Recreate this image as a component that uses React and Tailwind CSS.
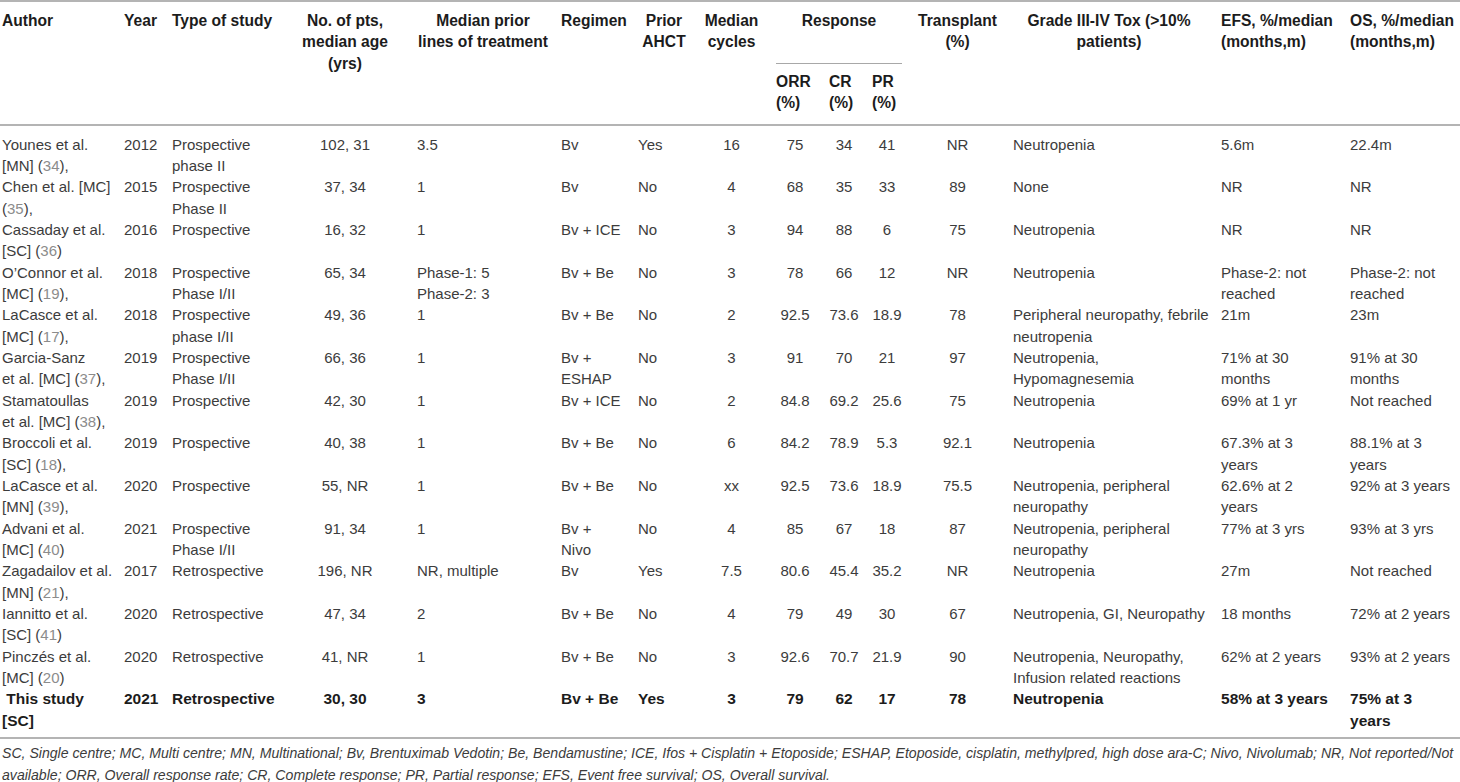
const ref = (n) => <span className="text-[#8c8c8c]">{n}</span>;

const cols = [
    { key: 'author', w: 'w-[124px]', td: 'pl-[2px] pr-[10px] text-left' },
    { key: 'year', w: 'w-[48px]', td: 'pr-[10px] text-left' },
    { key: 'type', w: 'w-[118px]', td: 'pr-[12px] text-left' },
    { key: 'pts', w: 'w-[127px]', td: 'pr-[17px] text-center' },
    { key: 'prior', w: 'w-[144px]', td: 'pr-[12px] text-left' },
    { key: 'regimen', w: 'w-[77px]', td: 'pr-[15px] text-left' },
    { key: 'ahct', w: 'w-[66px]', td: 'pr-[12px] text-left' },
    { key: 'cycles', w: 'w-[72px]', td: 'pr-[17px] text-center' },
    { key: 'orr', w: 'w-[53px]', td: 'pr-[15px] text-center' },
    { key: 'cr', w: 'w-[43px]', td: 'pr-[13px] text-center' },
    { key: 'pr', w: 'w-[46px]', td: 'pr-[16px] text-center' },
    { key: 'tx', w: 'w-[95px]', td: 'pr-[16px] text-center' },
    { key: 'tox', w: 'w-[208px]', td: 'pr-[8px] text-left' },
    { key: 'efs', w: 'w-[129px]', td: 'pr-[10px] text-left' },
    { key: 'os', w: 'w-[110px]', td: 'text-left' },
];

// line breaks written out so the cells wrap as in the printed table
const rows = [
    { author: <>Younes et al.<br />[MN] ({ref(34)}),</>, year: '2012', type: <>Prospective<br />phase II</>, pts: '102, 31', prior: '3.5', regimen: 'Bv', ahct: 'Yes', cycles: '16', orr: '75', cr: '34', pr: '41', tx: 'NR', tox: 'Neutropenia', efs: '5.6m', os: '22.4m' },
    { author: <>Chen et al. [MC]<br />({ref(35)}),</>, year: '2015', type: <>Prospective<br />Phase II</>, pts: '37, 34', prior: '1', regimen: 'Bv', ahct: 'No', cycles: '4', orr: '68', cr: '35', pr: '33', tx: '89', tox: 'None', efs: 'NR', os: 'NR' },
    { author: <>Cassaday et al.<br />[SC] ({ref(36)})</>, year: '2016', type: 'Prospective', pts: '16, 32', prior: '1', regimen: 'Bv + ICE', ahct: 'No', cycles: '3', orr: '94', cr: '88', pr: '6', tx: '75', tox: 'Neutropenia', efs: 'NR', os: 'NR' },
    { author: <>O’Connor et al.<br />[MC] ({ref(19)}),</>, year: '2018', type: <>Prospective<br />Phase I/II</>, pts: '65, 34', prior: <>Phase-1: 5<br />Phase-2: 3</>, regimen: 'Bv + Be', ahct: 'No', cycles: '3', orr: '78', cr: '66', pr: '12', tx: 'NR', tox: 'Neutropenia', efs: <>Phase-2: not<br />reached</>, os: <>Phase-2: not<br />reached</> },
    { author: <>LaCasce et al.<br />[MC] ({ref(17)}),</>, year: '2018', type: <>Prospective<br />phase I/II</>, pts: '49, 36', prior: '1', regimen: 'Bv + Be', ahct: 'No', cycles: '2', orr: '92.5', cr: '73.6', pr: '18.9', tx: '78', tox: <>Peripheral neuropathy, febrile<br />neutropenia</>, efs: '21m', os: '23m' },
    { author: <>Garcia-Sanz<br />et al. [MC] ({ref(37)}),</>, year: '2019', type: <>Prospective<br />Phase I/II</>, pts: '66, 36', prior: '1', regimen: <>Bv +<br />ESHAP</>, ahct: 'No', cycles: '3', orr: '91', cr: '70', pr: '21', tx: '97', tox: <>Neutropenia,<br />Hypomagnesemia</>, efs: <>71% at 30<br />months</>, os: <>91% at 30<br />months</> },
    { author: <>Stamatoullas<br />et al. [MC] ({ref(38)}),</>, year: '2019', type: 'Prospective', pts: '42, 30', prior: '1', regimen: 'Bv + ICE', ahct: 'No', cycles: '2', orr: '84.8', cr: '69.2', pr: '25.6', tx: '75', tox: 'Neutropenia', efs: '69% at 1 yr', os: 'Not reached' },
    { author: <>Broccoli et al.<br />[SC] ({ref(18)}),</>, year: '2019', type: 'Prospective', pts: '40, 38', prior: '1', regimen: 'Bv + Be', ahct: 'No', cycles: '6', orr: '84.2', cr: '78.9', pr: '5.3', tx: '92.1', tox: 'Neutropenia', efs: <>67.3% at 3<br />years</>, os: <>88.1% at 3<br />years</> },
    { author: <>LaCasce et al.<br />[MN] ({ref(39)}),</>, year: '2020', type: 'Prospective', pts: '55, NR', prior: '1', regimen: 'Bv + Be', ahct: 'No', cycles: 'xx', orr: '92.5', cr: '73.6', pr: '18.9', tx: '75.5', tox: <>Neutropenia, peripheral<br />neuropathy</>, efs: <>62.6% at 2<br />years</>, os: '92% at 3 years' },
    { author: <>Advani et al.<br />[MC] ({ref(40)})</>, year: '2021', type: <>Prospective<br />Phase I/II</>, pts: '91, 34', prior: '1', regimen: <>Bv +<br />Nivo</>, ahct: 'No', cycles: '4', orr: '85', cr: '67', pr: '18', tx: '87', tox: <>Neutropenia, peripheral<br />neuropathy</>, efs: '77% at 3 yrs', os: '93% at 3 yrs' },
    { author: <>Zagadailov et al.<br />[MN] ({ref(21)}),</>, year: '2017', type: 'Retrospective', pts: '196, NR', prior: 'NR, multiple', regimen: 'Bv', ahct: 'Yes', cycles: '7.5', orr: '80.6', cr: '45.4', pr: '35.2', tx: 'NR', tox: 'Neutropenia', efs: '27m', os: 'Not reached' },
    { author: <>Iannitto et al.<br />[SC] ({ref(41)})</>, year: '2020', type: 'Retrospective', pts: '47, 34', prior: '2', regimen: 'Bv + Be', ahct: 'No', cycles: '4', orr: '79', cr: '49', pr: '30', tx: '67', tox: 'Neutropenia, GI, Neuropathy', efs: '18 months', os: '72% at 2 years' },
    { author: <>Pinczés et al.<br />[MC] ({ref(20)})</>, year: '2020', type: 'Retrospective', pts: '41, NR', prior: '1', regimen: 'Bv + Be', ahct: 'No', cycles: '3', orr: '92.6', cr: '70.7', pr: '21.9', tx: '90', tox: <>Neutropenia, Neuropathy,<br />Infusion related reactions</>, efs: '62% at 2 years', os: '93% at 2 years' },
    { author: <>{'\u00a0'}This study<br />[SC]</>, year: '2021', type: 'Retrospective', pts: '30, 30', prior: '3', regimen: 'Bv + Be', ahct: 'Yes', cycles: '3', orr: '79', cr: '62', pr: '17', tx: '78', tox: 'Neutropenia', efs: '58% at 3 years', os: <>75% at 3<br />years</>, bold: true },
];

const th = 'align-top font-bold text-[#1c1c1c] border-b-2 border-[#b4b4b4] pt-[8px] whitespace-nowrap';

export default function App() {
    return (
        <div className="w-[1460px] bg-white font-['Liberation_Sans',Arial,sans-serif] text-[15px] leading-[21.33px] text-[#3c3c3c]">
            <div className="border-t-2 border-[#b4b4b4]">
                <table className="w-full table-fixed border-separate border-spacing-0">
                    <colgroup>
                        {cols.map((c) => <col key={c.key} className={c.w} />)}
                    </colgroup>
                    <thead className="text-[15.6px]">
                        <tr>
                            <th rowSpan={2} className={`${th} pl-[2px] text-left`}>Author</th>
                            <th rowSpan={2} className={`${th} text-left`}>Year</th>
                            <th rowSpan={2} className={`${th} text-left`}>Type of study</th>
                            <th rowSpan={2} className={`${th} pr-[17px] text-center`}>No. of pts,<br />median age<br />(yrs)</th>
                            <th rowSpan={2} className={`${th} pr-[12px] text-center`}>Median prior<br />lines of treatment</th>
                            <th rowSpan={2} className={`${th} text-left`}>Regimen</th>
                            <th rowSpan={2} className={`${th} pr-[14px] text-center`}>Prior<br />AHCT</th>
                            <th rowSpan={2} className={`${th} pr-[17px] text-center`}>Median<br />cycles</th>
                            <th colSpan={3} className="align-top font-bold text-[#1c1c1c] pt-[8px] pr-[16px]">
                                <div className="h-[54px] border-b border-[#a8a8a8] text-center">Response</div>
                            </th>
                            <th rowSpan={2} className={`${th} pr-[16px] text-center`}>Transplant<br />(%)</th>
                            <th rowSpan={2} className={`${th} pr-[16px] text-center`}>Grade III-IV Tox (&gt;10%<br />patients)</th>
                            <th rowSpan={2} className={`${th} text-left`}>EFS, %/median<br />(months,m)</th>
                            <th rowSpan={2} className={`${th} text-left`}>OS, %/median<br />(months,m)</th>
                        </tr>
                        <tr>
                            {['ORR', 'CR', 'PR'].map((h) => (
                                <th key={h} className="align-top text-left font-bold text-[#1c1c1c] pt-[7px] pb-[10px] border-b-2 border-[#b4b4b4]">{h}<br />(%)</th>
                            ))}
                        </tr>
                    </thead>
                    <tbody>
                        {rows.map((r, i) => (
                            <tr key={i} className={r.bold ? 'font-bold text-[15.5px] text-[#1c1c1c] whitespace-nowrap' : ''}>
                                {cols.map((c) => (
                                    <td
                                        key={c.key}
                                        className={`align-top ${c.td} ${i === 0 ? 'pt-[8px]' : ''} ${i === rows.length - 1 ? 'pb-[6px]' : ''}`}
                                    >
                                        {r[c.key]}
                                    </td>
                                ))}
                            </tr>
                        ))}
                    </tbody>
                </table>
            </div>
            <div className="border-t-2 border-[#b4b4b4] pt-[3px] pl-[2px] italic text-[14.1px] leading-[22px] whitespace-nowrap text-[#3c3c3c]">
                SC, Single centre; MC, Multi centre; MN, Multinational; Bv, Brentuximab Vedotin; Be, Bendamustine; ICE, Ifos + Cisplatin + Etoposide; ESHAP, Etoposide, cisplatin, methylpred, high dose ara-C; Nivo, Nivolumab; NR, Not reported/Not
                <br />
                available; ORR, Overall response rate; CR, Complete response; PR, Partial response; EFS, Event free survival; OS, Overall survival.
            </div>
        </div>
    );
}
